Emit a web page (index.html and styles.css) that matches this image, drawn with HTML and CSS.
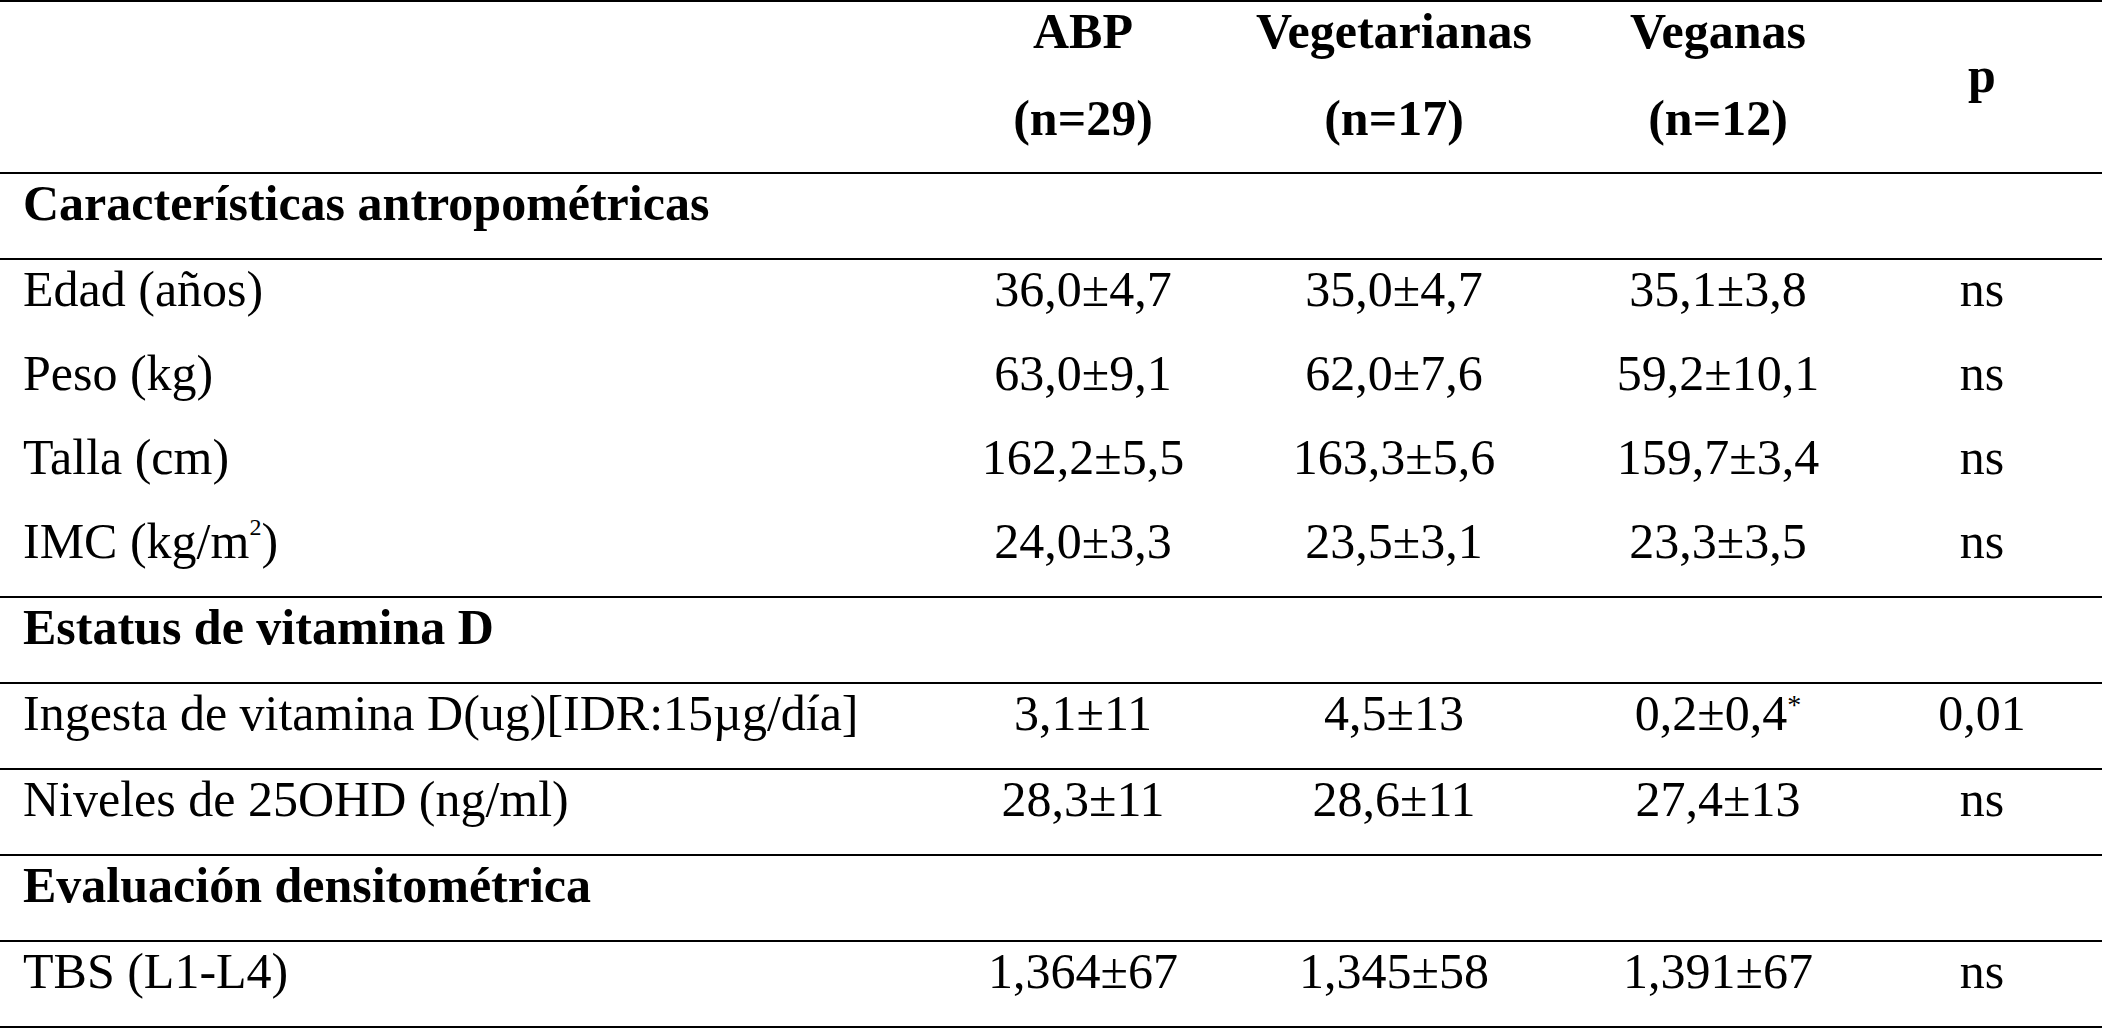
FILE: index.html
```html
<!DOCTYPE html>
<html lang="es">
<head>
<meta charset="utf-8">
<title>Tabla</title>
<link rel="stylesheet" href="styles.css">
</head>
<body>
<table class="data">
  <colgroup>
    <col class="col-label">
    <col class="col-abp">
    <col class="col-veg">
    <col class="col-vgn">
    <col class="col-p">
  </colgroup>
  <thead>
    <tr>
      <th></th>
      <th>ABP<span class="head-sub">(n=29)</span></th>
      <th>Vegetarianas<span class="head-sub">(n=17)</span></th>
      <th>Veganas<span class="head-sub">(n=12)</span></th>
      <th class="p">p</th>
    </tr>
  </thead>
  <tbody>
    <tr class="section ruled"><td class="label" colspan="5">Características antropométricas</td></tr>
    <tr><td class="label">Edad (años)</td><td>36,0±4,7</td><td>35,0±4,7</td><td>35,1±3,8</td><td>ns</td></tr>
    <tr><td class="label">Peso (kg)</td><td>63,0±9,1</td><td>62,0±7,6</td><td>59,2±10,1</td><td>ns</td></tr>
    <tr><td class="label">Talla (cm)</td><td>162,2±5,5</td><td>163,3±5,6</td><td>159,7±3,4</td><td>ns</td></tr>
    <tr class="ruled"><td class="label">IMC (kg/m<sup class="sq">2</sup>)</td><td>24,0±3,3</td><td>23,5±3,1</td><td>23,3±3,5</td><td>ns</td></tr>
    <tr class="section ruled"><td class="label" colspan="5">Estatus de vitamina D</td></tr>
    <tr class="ruled"><td class="label">Ingesta de vitamina D(ug)[IDR:15µg/día]</td><td>3,1±11</td><td>4,5±13</td><td>0,2±0,4<sup class="ast">*</sup></td><td>0,01</td></tr>
    <tr class="ruled"><td class="label">Niveles de 25OHD (ng/ml)</td><td>28,3±11</td><td>28,6±11</td><td>27,4±13</td><td>ns</td></tr>
    <tr class="section ruled"><td class="label" colspan="5">Evaluación densitométrica</td></tr>
    <tr class="ruled"><td class="label">TBS (L1-L4)</td><td>1,364±67</td><td>1,345±58</td><td>1,391±67</td><td>ns</td></tr>
  </tbody>
</table>
</body>
</html>
```

FILE: styles.css
```css
html, body {
  margin: 0;
  padding: 0;
  background: #fff;
}

body {
  font-family: "Liberation Serif", "Times New Roman", serif;
  color: #000;
}

.data {
  width: 2102px;
  border-collapse: separate;
  border-spacing: 0;
  table-layout: fixed;
  font-size: 50px;
  line-height: 58px;
}

.col-label { width: 952px; }
.col-abp { width: 262px; }
.col-veg { width: 360px; }
.col-vgn { width: 288px; }
.col-p { width: 240px; }

.data th,
.data td {
  padding: 0 0 26px 0;
  vertical-align: top;
  text-align: center;
  font-weight: normal;
}

.data thead th {
  border-top: 2px solid #000;
  border-bottom: 2px solid #000;
  padding-bottom: 25px;
  font-weight: bold;
}

.data thead th.p {
  padding-top: 44px;
}

.head-sub {
  display: block;
  margin-top: 29px;
}

.data td.label {
  text-align: left;
  padding-left: 23px;
}

.data tr.section td {
  font-weight: bold;
}

.data tr.ruled td {
  border-bottom: 2px solid #000;
}

.data sup {
  line-height: 0;
}

.data sup.sq {
  font-size: 24px;
  vertical-align: 23px;
}

.data sup.ast {
  font-size: 28px;
  vertical-align: 16px;
}
```
